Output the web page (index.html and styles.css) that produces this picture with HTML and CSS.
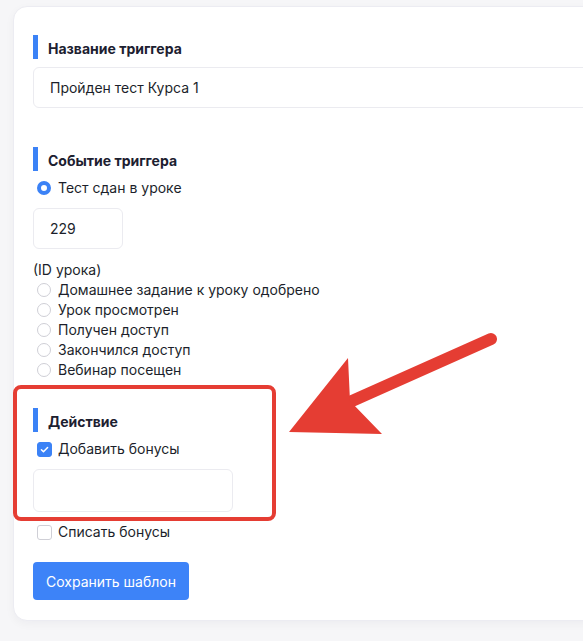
FILE: index.html
```html
<!DOCTYPE html>
<html lang="ru">
<head>
<meta charset="utf-8">
<link rel="stylesheet" href="styles.css">
</head>
<body>
<div class="card">
  <section class="section">
    <h3 class="heading">Название триггера</h3>
    <div class="input input-wide">Пройден тест Курса 1</div>
  </section>

  <section class="section section-gap">
    <h3 class="heading">Событие триггера</h3>
    <label class="option first-option"><span class="radio checked"></span>Тест сдан в уроке</label>
    <div class="input input-small">229</div>
    <div class="note">(ID урока)</div>
    <label class="option"><span class="radio"></span>Домашнее задание к уроку одобрено</label>
    <label class="option"><span class="radio"></span>Урок просмотрен</label>
    <label class="option"><span class="radio"></span>Получен доступ</label>
    <label class="option"><span class="radio"></span>Закончился доступ</label>
    <label class="option"><span class="radio"></span>Вебинар посещен</label>
  </section>

  <section class="section section-gap-sm">
    <h3 class="heading">Действие</h3>
    <label class="option first-option"><span class="check checked"><svg viewBox="0 0 16 16" width="11" height="11"><path d="M3.5 8.3l3 3 6-6.3" fill="none" stroke="#fff" stroke-width="2.2" stroke-linecap="round" stroke-linejoin="round"/></svg></span>Добавить бонусы</label>
    <div class="input input-mid"></div>
    <label class="option option-after"><span class="check"></span>Списать бонусы</label>
  </section>

  <button class="btn">Сохранить шаблон</button>
</div>

<div class="highlight"></div>
<svg class="arrow" width="583" height="641" viewBox="0 0 583 641">
  <line x1="491" y1="339" x2="352" y2="401" stroke="#e53d33" stroke-width="12" stroke-linecap="round"/>
  <polygon points="289,432 348,358 350,401 382,434" fill="#e53d33"/>
</svg>
</body>
</html>
```

FILE: styles.css
```css
html, body {
  margin: 0;
  padding: 0;
}
body {
  background: #f6f6f8;
  font-family: Inter, "Noto Sans", sans-serif;
  color: #1c1f2b;
  font-size: 14px;
  overflow: hidden;
  height: 641px;
  position: relative;
}
.card {
  margin: 6px 0 0 13px;
  width: 640px;
  background: #fff;
  border: 1px solid #ececf2;
  border-radius: 14px;
  padding: 28px 19px 20px;
  box-shadow: 0 3px 10px rgba(20, 20, 40, 0.04);
}
.section {
  display: flex;
  flex-direction: column;
  align-items: flex-start;
}
.section-gap {
  margin-top: 39px;
}
.section-gap-sm {
  margin-top: 28px;
}
.heading {
  margin: 0;
  height: 22px;
  padding-top: 2px;
  line-height: 24px;
  border-left: 5px solid #3b82f6;
  padding-left: 10px;
  font-size: 14px;
  font-weight: 700;
  color: #1c2030;
}
.input {
  box-sizing: border-box;
  border: 1px solid #ebebf0;
  border-radius: 6px;
  padding-left: 16px;
  display: flex;
  align-items: center;
  font-size: 14px;
  color: #1c1f2b;
}
.input-wide {
  margin-top: 8px;
  width: 600px;
  height: 41px;
}
.input-small {
  margin-top: 10px;
  width: 90px;
  height: 41px;
}
.input-mid {
  margin-top: 10px;
  width: 200px;
  height: 43px;
}
.note {
  margin-top: 11px;
  height: 20px;
  line-height: 20px;
}
.option {
  display: flex;
  align-items: center;
  height: 20px;
  line-height: 20px;
  padding-left: 4px;
  gap: 7px;
}
.first-option {
  margin-top: 7px;
}
.option-after {
  margin-top: 10px;
}
.radio {
  box-sizing: border-box;
  width: 14px;
  height: 14px;
  border-radius: 50%;
  border: 1px solid #cfcfd6;
  background: #fff;
  flex: none;
}
.radio.checked {
  border: 4px solid #3b82f6;
}
.check {
  box-sizing: border-box;
  width: 15px;
  height: 15px;
  border-radius: 3px;
  border: 1px solid #cfcfd6;
  background: #fff;
  flex: none;
  display: flex;
  align-items: center;
  justify-content: center;
  margin-right: -1px;
}
.check.checked {
  background: #3b82f6;
  border-color: #3b82f6;
}
.btn {
  margin-top: 20px;
  height: 38px;
  width: 156px;
  border: none;
  border-radius: 4px;
  background: #3d83f8;
  color: #fff;
  font-family: Inter, "Noto Sans", sans-serif;
  font-size: 14px;
  padding: 0;
}
.highlight {
  position: absolute;
  left: 13px;
  top: 385px;
  width: 255px;
  height: 128px;
  border: 4px solid #e53d33;
  border-radius: 8px;
}
.arrow {
  position: absolute;
  left: 0;
  top: 0;
  pointer-events: none;
}
```
